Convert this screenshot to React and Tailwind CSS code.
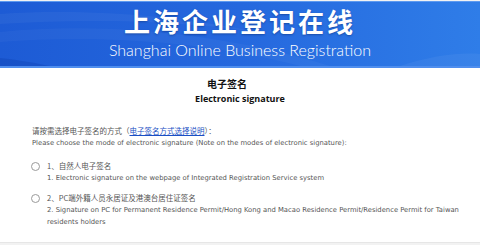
import React from 'react'

const options = [
  {
    id: 1,
    zh: '1、自然人电子签名',
    en: '1. Electronic signature on the webpage of Integrated Registration Service system',
  },
  {
    id: 2,
    zh: '2、PC端外籍人员永居证及港澳台居住证签名',
    en: '2. Signature on PC for Permanent Residence Permit/Hong Kong and Macao Residence Permit/Residence Permit for Taiwan residents holders',
  },
]

function Header() {
  return (
    <div className="relative mt-px h-[67px] overflow-hidden border-t border-b-2 border-t-[#5d9af0] border-b-[#4f8eee] bg-gradient-to-r from-[#1d5bd5] via-[#2568de] to-[#2f7de8]">
      {/* background swooshes */}
      <svg className="absolute inset-0" width="480" height="64" viewBox="0 0 480 64">
        <path d="M0 12 C 90 6, 200 14, 300 40 C 240 22, 120 14, 0 22 Z" fill="#ffffff" opacity="0.045" />
        <path d="M0 30 C 100 20, 220 30, 330 64 L 300 64 C 210 40, 100 32, 0 40 Z" fill="#ffffff" opacity="0.035" />
        <path d="M0 56 C 20 58, 40 62, 50 64 L 0 64 Z" fill="#0d3fae" opacity="0.35" />
        <path d="M400 64 C 430 54, 460 50, 480 52 L 480 64 Z" fill="#ffffff" opacity="0.05" />
      </svg>
      <div className="relative flex flex-col items-center pt-[4px]">
        <div className="font-['Noto_Sans_CJK_SC',sans-serif] text-[26px] leading-[30px] font-bold tracking-[3px] text-white [text-shadow:0_1px_2px_rgba(0,30,90,0.4)]">
          上海企业登记在线
        </div>
        <div className="mt-[5px] font-['Lato',sans-serif] text-[16px] leading-[18px] font-light text-white">
          Shanghai Online Business Registration
        </div>
      </div>
    </div>
  )
}

function Option({ item }) {
  return (
    <div className="flex">
      <div className="mt-[0.5px] ml-[-1px] mr-[7px] h-[9px] w-[9px] shrink-0 rounded-full border border-[#9a9a9a] bg-white" />
      <div className="w-[420px]">
        <div className="font-['Noto_Sans_CJK_SC',sans-serif] text-[7.5px] leading-[10px] text-[#555]">{item.zh}</div>
        <div className="mt-[1px] font-['DejaVu_Sans',sans-serif] text-[6.8px] leading-[12px] text-[#555]">{item.en}</div>
      </div>
    </div>
  )
}

export default function App() {
  return (
    <div className="h-[245px] w-[480px] overflow-hidden bg-[#f2f2f2]">
      <Header />
      <div className="h-[175px] border-b border-[#e6e6e6] bg-white">
        <div className="flex flex-col items-center pt-[9px]">
          <div className="pr-[26px] font-['Noto_Sans_CJK_SC',sans-serif] text-[10px] leading-[13px] font-bold text-[#111]">
            电子签名
          </div>
          <div className="mt-[3px] font-['Open_Sans',sans-serif] text-[9px] leading-[11px] font-bold text-[#111]">
            Electronic signature
          </div>
        </div>
        <div className="mt-[21px] pl-[32px]">
          <div className="font-['Noto_Sans_CJK_SC',sans-serif] text-[7.5px] leading-[11px] text-[#555]">
            请按需选择电子签名的方式（
            <a className="text-[#1a4fc4] underline">电子签名方式选择说明</a>
            ）：
          </div>
          <div className="mt-[1px] font-['DejaVu_Sans',sans-serif] text-[6.8px] leading-[12px] text-[#555]">
            Please choose the mode of electronic signature (Note on the modes of electronic signature):
          </div>
        </div>
        <div className="mt-[12px] flex flex-col gap-[9px] pl-[32px]">
          {options.map(item => (
            <Option key={item.id} item={item} />
          ))}
        </div>
      </div>
    </div>
  )
}
